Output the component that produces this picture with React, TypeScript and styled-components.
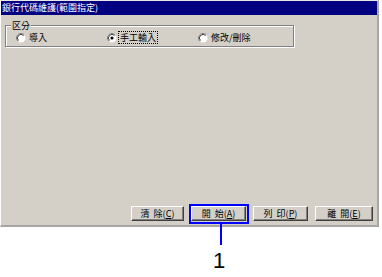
import React from "react";
import styled, { createGlobalStyle } from "styled-components";

const GlobalStyle = createGlobalStyle`
  html, body {
    margin: 0;
    padding: 0;
    background: #ffffff;
  }
  body {
    font-family: "Noto Sans CJK TC", "Liberation Sans", sans-serif;
  }
`;

const Page = styled.div`
  width: 382px;
  height: 277px;
  background: #ffffff;
`;

const Window = styled.div`
  width: 379px;
  height: 227px;
  box-sizing: border-box;
  display: flex;
  flex-direction: column;
  background: #d4d0c8;
  border-top: 1px solid #e8e6e2;
  border-left: 1px solid #ffffff;
  border-right: 2px solid #a8a6a2;
  border-bottom: 2px solid #a8a6a2;
`;

const TitleBar = styled.div`
  height: 14px;
  background: #000080;
  color: #ffffff;
  font-size: 9px;
  line-height: 14px;
  padding-left: 1px;
  white-space: nowrap;
`;

const Body = styled.div`
  flex: 1;
  display: flex;
  flex-direction: column;
  padding: 10px 4px 4px 4px;
`;

const GroupBox = styled.div`
  position: relative;
  width: 289px;
  height: 22px;
  box-sizing: border-box;
  border: 1px solid #808080;
  box-shadow: inset 1px 1px 0 #ffffff, 1px 1px 0 #ffffff;
`;

const Legend = styled.span`
  position: absolute;
  top: -6px;
  left: 5px;
  padding: 0 1px;
  background: #d4d0c8;
  font-size: 9px;
  line-height: 11px;
  color: #000;
`;

const RadioRow = styled.div`
  display: grid;
  grid-template-columns: 91px 91px 91px;
  padding: 6px 0 0 10px;
`;

const RadioItem = styled.label`
  display: flex;
  align-items: center;
  gap: 2px;
  font-size: 9px;
  line-height: 11px;
  color: #000;
`;

const RadioText = styled.span<{ $focus?: boolean }>`
  padding: 0 1px;
  outline: ${(p) => (p.$focus ? "1px dotted #000" : "none")};
`;

const Spacer = styled.div`
  flex: 1;
`;

const ButtonRow = styled.div`
  display: flex;
  justify-content: flex-end;
  gap: 7px;
`;

const Button = styled.div<{ $w: number }>`
  width: ${(p) => p.$w}px;
  height: 15px;
  box-sizing: border-box;
  display: flex;
  align-items: center;
  justify-content: center;
  font-size: 9px;
  color: #000;
  background: #d4d0c8;
  border-top: 1px solid #ffffff;
  border-left: 1px solid #ffffff;
  border-right: 1px solid #404040;
  border-bottom: 1px solid #404040;
  box-shadow: inset -1px -1px 0 #808080;
  white-space: nowrap;
`;

const Gap = styled.span`
  display: inline-block;
  width: 4px;
`;

const Callout = styled.div`
  position: relative;
  &::before {
    content: "";
    position: absolute;
    top: -2px;
    left: -2px;
    right: -3px;
    bottom: -3px;
    border: 2px solid #0000ff;
  }
`;

const CalloutLine = styled.div`
  position: absolute;
  left: 29px;
  top: calc(100% + 3px);
  width: 2px;
  height: 21px;
  background: #0000ff;
`;

const CalloutNumber = styled.div`
  position: absolute;
  left: 22px;
  top: calc(100% + 29px);
  font-family: "Liberation Sans", Arial, sans-serif;
  font-size: 22px;
  line-height: 22px;
  color: #000;
`;

const Radio: React.FC<{ checked?: boolean }> = ({ checked }) => (
  <svg width="10" height="10" viewBox="0 0 10 10">
    <circle cx="5" cy="5" r="4.5" fill="#ffffff" />
    <path d="M1.8 8.2 A4.5 4.5 0 0 1 8.2 1.8" fill="none" stroke="#808080" strokeWidth="1" />
    <path d="M2.5 7.5 A3.5 3.5 0 0 1 7.5 2.5" fill="none" stroke="#404040" strokeWidth="1" />
    {checked && <circle cx="5" cy="5" r="1.6" fill="#000" />}
  </svg>
);

const options = [
  { label: "導入", checked: false },
  { label: "手工輸入", checked: true },
  { label: "修改/刪除", checked: false },
];

const App: React.FC = () => {
  return (
    <Page>
      <GlobalStyle />
      <Window>
        <TitleBar>銀行代碼維護(範圍指定)</TitleBar>
        <Body>
          <GroupBox>
            <Legend>区分</Legend>
            <RadioRow>
              {options.map((o) => (
                <RadioItem key={o.label}>
                  <Radio checked={o.checked} />
                  <RadioText $focus={o.checked}>{o.label}</RadioText>
                </RadioItem>
              ))}
            </RadioRow>
          </GroupBox>
          <Spacer />
          <ButtonRow>
            <Button $w={53}>
              清<Gap />除(<u>C</u>)
            </Button>
            <Callout>
              <Button $w={55}>
                開<Gap />始(<u>A</u>)
              </Button>
              <CalloutLine />
              <CalloutNumber>1</CalloutNumber>
            </Callout>
            <Button $w={55}>
              列<Gap />印(<u>P</u>)
            </Button>
            <Button $w={58}>
              離<Gap />開(<u>E</u>)
            </Button>
          </ButtonRow>
        </Body>
      </Window>
    </Page>
  );
};

export default App;
